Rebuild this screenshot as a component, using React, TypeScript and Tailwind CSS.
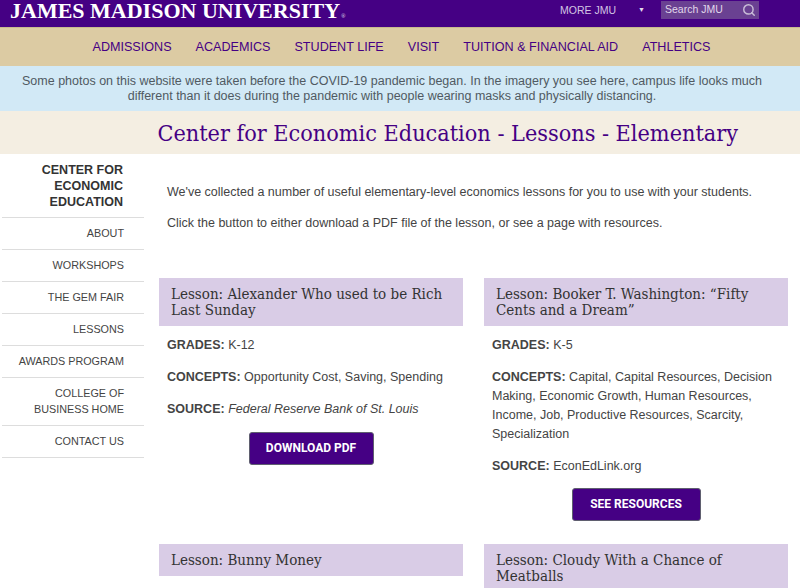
import { Search } from "lucide-react";

const navItems = ["ADMISSIONS", "ACADEMICS", "STUDENT LIFE", "VISIT", "TUITION & FINANCIAL AID", "ATHLETICS"];

const sideLinks = ["ABOUT", "WORKSHOPS", "THE GEM FAIR", "LESSONS", "AWARDS PROGRAM", "COLLEGE OF BUSINESS HOME", "CONTACT US"];

const slab = "font-['DejaVu_Serif_Condensed','DejaVu_Serif',serif]";

const LessonTitle = ({ children, className = "" }: { children: React.ReactNode; className?: string }) => (
  <h3 className={`bg-[#d9cce6] pl-3 pr-3 pt-[8px] pb-[8px] text-[15px] leading-[16px] text-[#333] ${slab} ${className}`}>
    {children}
  </h3>
);

const Meta = ({ label, children }: { label: string; children: React.ReactNode }) => (
  <p className="mb-[13px]">
    <b className="font-bold">{label}:</b> {children}
  </p>
);

const Button = ({ children, className = "" }: { children: React.ReactNode; className?: string }) => (
  <div className="flex justify-center">
    <a className={`flex h-[33px] items-center justify-center rounded-[3px] border border-[#5f5f6f] bg-[#450084] font-['Roboto',sans-serif] text-[12px] font-bold text-white ${className}`}>
      {children}
    </a>
  </div>
);

export default function App() {
  return (
    <div className="h-[588px] w-[800px] overflow-hidden bg-white font-['Liberation_Sans',sans-serif] text-[#444]">
      <header className="flex h-[28px] items-start justify-between border-b border-[#c9b98f] bg-[#450084]">
        <div className="ml-[10px] font-['Liberation_Serif',serif] text-[22px] leading-[21px] font-bold whitespace-nowrap text-white">
          JAMES MADISON UNIVERSITY
          <span className="ml-px text-[6px] text-[#cfc4dd]">®</span>
        </div>
        <div className="mr-[41px] flex items-start">
          <span className="mt-[4px] text-[10.5px] leading-[12px] text-[#d3c5e3]">MORE JMU</span>
          <span className="mt-[6px] ml-[22px] text-[7px] leading-[8px] text-[#e4dcec]">▼</span>
          <div className="mt-[1px] ml-[16px] flex h-[18px] w-[98px] items-center justify-between bg-[#6a4192] pr-[3px] pl-[4px]">
            <span className="text-[10.5px] text-[#e1d8eb]">Search JMU</span>
            <Search size={14} strokeWidth={2.5} className="text-[#c9bdd8]" />
          </div>
        </div>
      </header>

      <nav className="flex h-[38px] items-center justify-center gap-[24px] bg-[#dccba3] pl-[3px] text-[12.6px] text-[#450084]">
        {navItems.map((item) => (
          <a key={item}>{item}</a>
        ))}
      </nav>

      <div className="flex h-[45px] items-center justify-center bg-[#d2e9f6] pr-[16px] text-center text-[12.5px] leading-[15px] text-[#505a62]">
        <p className="w-[760px]">
          Some photos on this website were taken before the COVID-19 pandemic began. In the imagery you see here, campus life looks much different than it does during the pandemic with people wearing masks and physically distancing.
        </p>
      </div>

      <div className={`flex h-[43px] items-center justify-end bg-[#f4eee2] pt-[2px] pr-[62px] text-[23.2px] text-[#450084] ${slab}`}>
        Center for Economic Education - Lessons - Elementary
      </div>

      <div className="flex items-start">
        <aside className="mt-[8px] ml-[2px] w-[142px] shrink-0 text-right text-[10.8px] leading-[16px]">
          <div className="border-b border-[#ddd] pr-[21px] pb-[7px] pl-[30px] text-[#333]">
            <b className="block text-[12.5px] leading-[16px] font-bold">CENTER FOR ECONOMIC EDUCATION</b>
          </div>
          {sideLinks.map((link) => (
            <a key={link} className="block border-b border-[#ddd] pt-[7px] pr-[20px] pb-[8px] pl-[10px]">
              {link}
            </a>
          ))}
        </aside>

        <main className="ml-[15px] min-w-0 flex-1 pr-[12px] text-[12.5px] leading-[19px]">
          <p className="mt-[29px] ml-[8px]">We've collected a number of useful elementary-level economics lessons for you to use with your students.</p>
          <p className="mt-[12px] ml-[8px]">Click the button to either download a PDF file of the lesson, or see a page with resources.</p>

          <div className="mt-[45px] grid grid-cols-[304px_304px] gap-x-[21px]">
            <section className="h-[266px]">
              <LessonTitle>Lesson: Alexander Who used to be Rich Last Sunday</LessonTitle>
              <div className="mt-[10px] px-[8px]">
                <Meta label="GRADES">K-12</Meta>
                <Meta label="CONCEPTS">Opportunity Cost, Saving, Spending</Meta>
                <Meta label="SOURCE"><i>Federal Reserve Bank of St. Louis</i></Meta>
              </div>
              <Button className="w-[125px]">DOWNLOAD PDF</Button>
            </section>
            <section className="h-[266px]">
              <LessonTitle>Lesson: Booker T. Washington: “Fifty Cents and a Dream”</LessonTitle>
              <div className="mt-[10px] px-[8px]">
                <Meta label="GRADES">K-5</Meta>
                <Meta label="CONCEPTS">Capital, Capital Resources, Decision Making, Economic Growth, Human Resources, Income, Job, Productive Resources, Scarcity, Specialization</Meta>
                <Meta label="SOURCE">EconEdLink.org</Meta>
              </div>
              <Button className="mt-[-1px] w-[129px]">SEE RESOURCES</Button>
            </section>
            <section>
              <LessonTitle>Lesson: Bunny Money</LessonTitle>
            </section>
            <section>
              <LessonTitle>Lesson: Cloudy With a Chance of Meatballs</LessonTitle>
            </section>
          </div>
        </main>
      </div>
    </div>
  );
}
